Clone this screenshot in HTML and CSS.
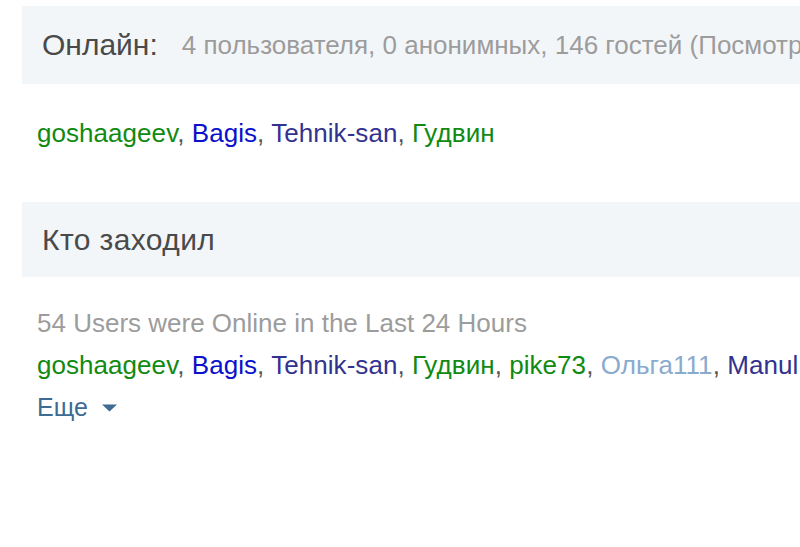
FILE: index.html
```html
<!DOCTYPE html>
<html lang="ru">
<head>
<meta charset="utf-8">
<link rel="stylesheet" href="styles.css">
</head>
<body>
<div class="page">
  <section class="block">
    <div class="bar">
      <span class="bar-title">Онлайн:</span>
      <span class="bar-meta">4 пользователя, 0 анонимных, 146 гостей (Посмотреть полный список)</span>
    </div>
    <div class="body body-online">
      <div class="names"><a class="u-green">goshaageev</a>, <a class="u-blue">Bagis</a>, <a class="u-navy">Tehnik-san</a>, <a class="u-green">Гудвин</a></div>
    </div>
  </section>
  <section class="block block-second">
    <div class="bar bar-short">
      <span class="bar-title bar-title-wide">Кто заходил</span>
    </div>
    <div class="body body-recent">
      <div class="stat">54 Users were Online in the Last 24 Hours</div>
      <div class="names"><a class="u-green">goshaageev</a>, <a class="u-blue">Bagis</a>, <a class="u-navy">Tehnik-san</a>, <a class="u-green">Гудвин</a>, <a class="u-green">pike73</a>, <a class="u-light">Ольга111</a>, <a class="u-navy">Manul</a>, <a class="u-green">Sergey</a></div>
      <div class="more">Еще <svg class="caret" width="15" height="8" viewBox="0 0 15 8"><path d="M0 0.5 H15 L7.5 7.5 Z" fill="#3d6b94"/></svg></div>
    </div>
  </section>
</div>
</body>
</html>
```
FILE: styles.css
```css
html, body {
  margin: 0;
  padding: 0;
  background: #ffffff;
  overflow: hidden;
}
body {
  font-family: "Liberation Sans", Arial, sans-serif;
  width: 800px;
  height: 547px;
}
.page {
  padding-top: 6px;
  padding-left: 22px;
  width: 1200px;
}
.bar {
  background: #f3f6f9;
  height: 78px;
  display: flex;
  align-items: center;
  padding-left: 20px;
  white-space: nowrap;
}
.bar-short {
  height: 75px;
}
.bar-title {
  font-size: 30px;
  color: #4a4a4a;
  margin-right: 24px;
}
.bar-title-wide {
  letter-spacing: 0.4px;
}
.bar-meta {
  font-size: 26px;
  color: #9c9c9c;
}
.body {
  padding-left: 15px;
  white-space: nowrap;
  box-sizing: border-box;
}
.body-online {
  padding-top: 28px;
  height: 118px;
}
.body-recent {
  padding-top: 25px;
}
.names {
  font-size: 26px;
  line-height: 42px;
  color: #555;
  letter-spacing: 0.05px;
}
.stat {
  font-size: 26px;
  line-height: 42px;
  color: #9c9c9c;
}
.more {
  font-size: 25px;
  line-height: 42px;
  color: #3d6b94;
  display: flex;
  align-items: center;
  gap: 14px;
}
.caret {
  margin-top: 1px;
}
.u-green { color: #118a11; }
.u-blue { color: #0a10cc; }
.u-navy { color: #32338f; }
.u-light { color: #8aaace; }
```
